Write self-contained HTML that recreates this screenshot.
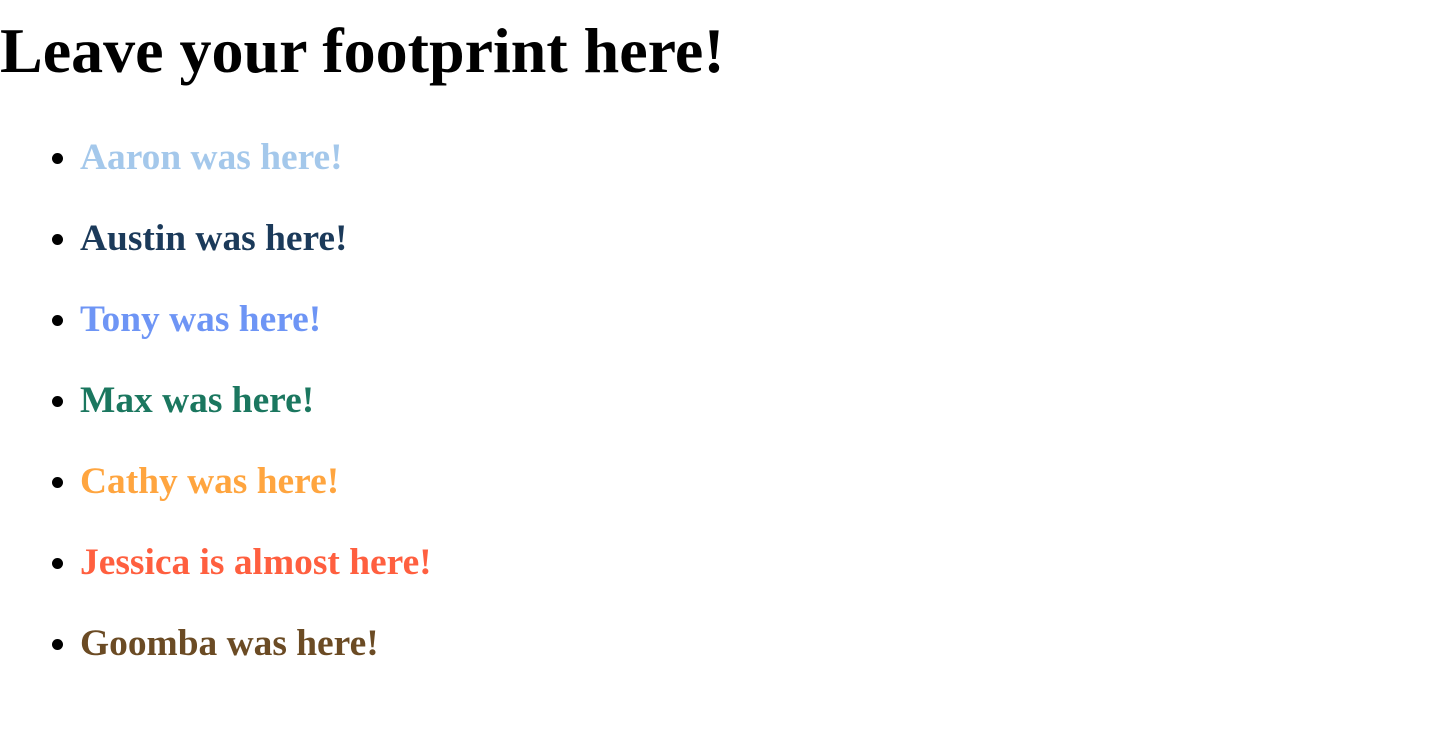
<!DOCTYPE html>
<html><head><meta charset="utf-8"><style>
html,body{margin:0;padding:0;background:#fff;width:1440px;height:730px;overflow:hidden}
body{font-family:"Liberation Serif",serif}
h1{font-size:64px;font-weight:bold;margin:14px 0 0 0;line-height:74px}
ul{margin:29px 0 0 0;padding-left:80px;color:#000}
li{font-size:37.44px;font-weight:bold;line-height:81px}
</style></head><body>
<h1>Leave your footprint here!</h1>
<ul>
<li><span style="color:#a4c8eb">Aaron was here!</span></li>
<li><span style="color:#1b3a5a">Austin was here!</span></li>
<li><span style="color:#6e95f5">Tony was here!</span></li>
<li><span style="color:#1b775f">Max was here!</span></li>
<li><span style="color:#ffa53f">Cathy was here!</span></li>
<li><span style="color:#ff5f3f">Jessica is almost here!</span></li>
<li><span style="color:#6b4b24">Goomba was here!</span></li>
</ul>
</body></html>
